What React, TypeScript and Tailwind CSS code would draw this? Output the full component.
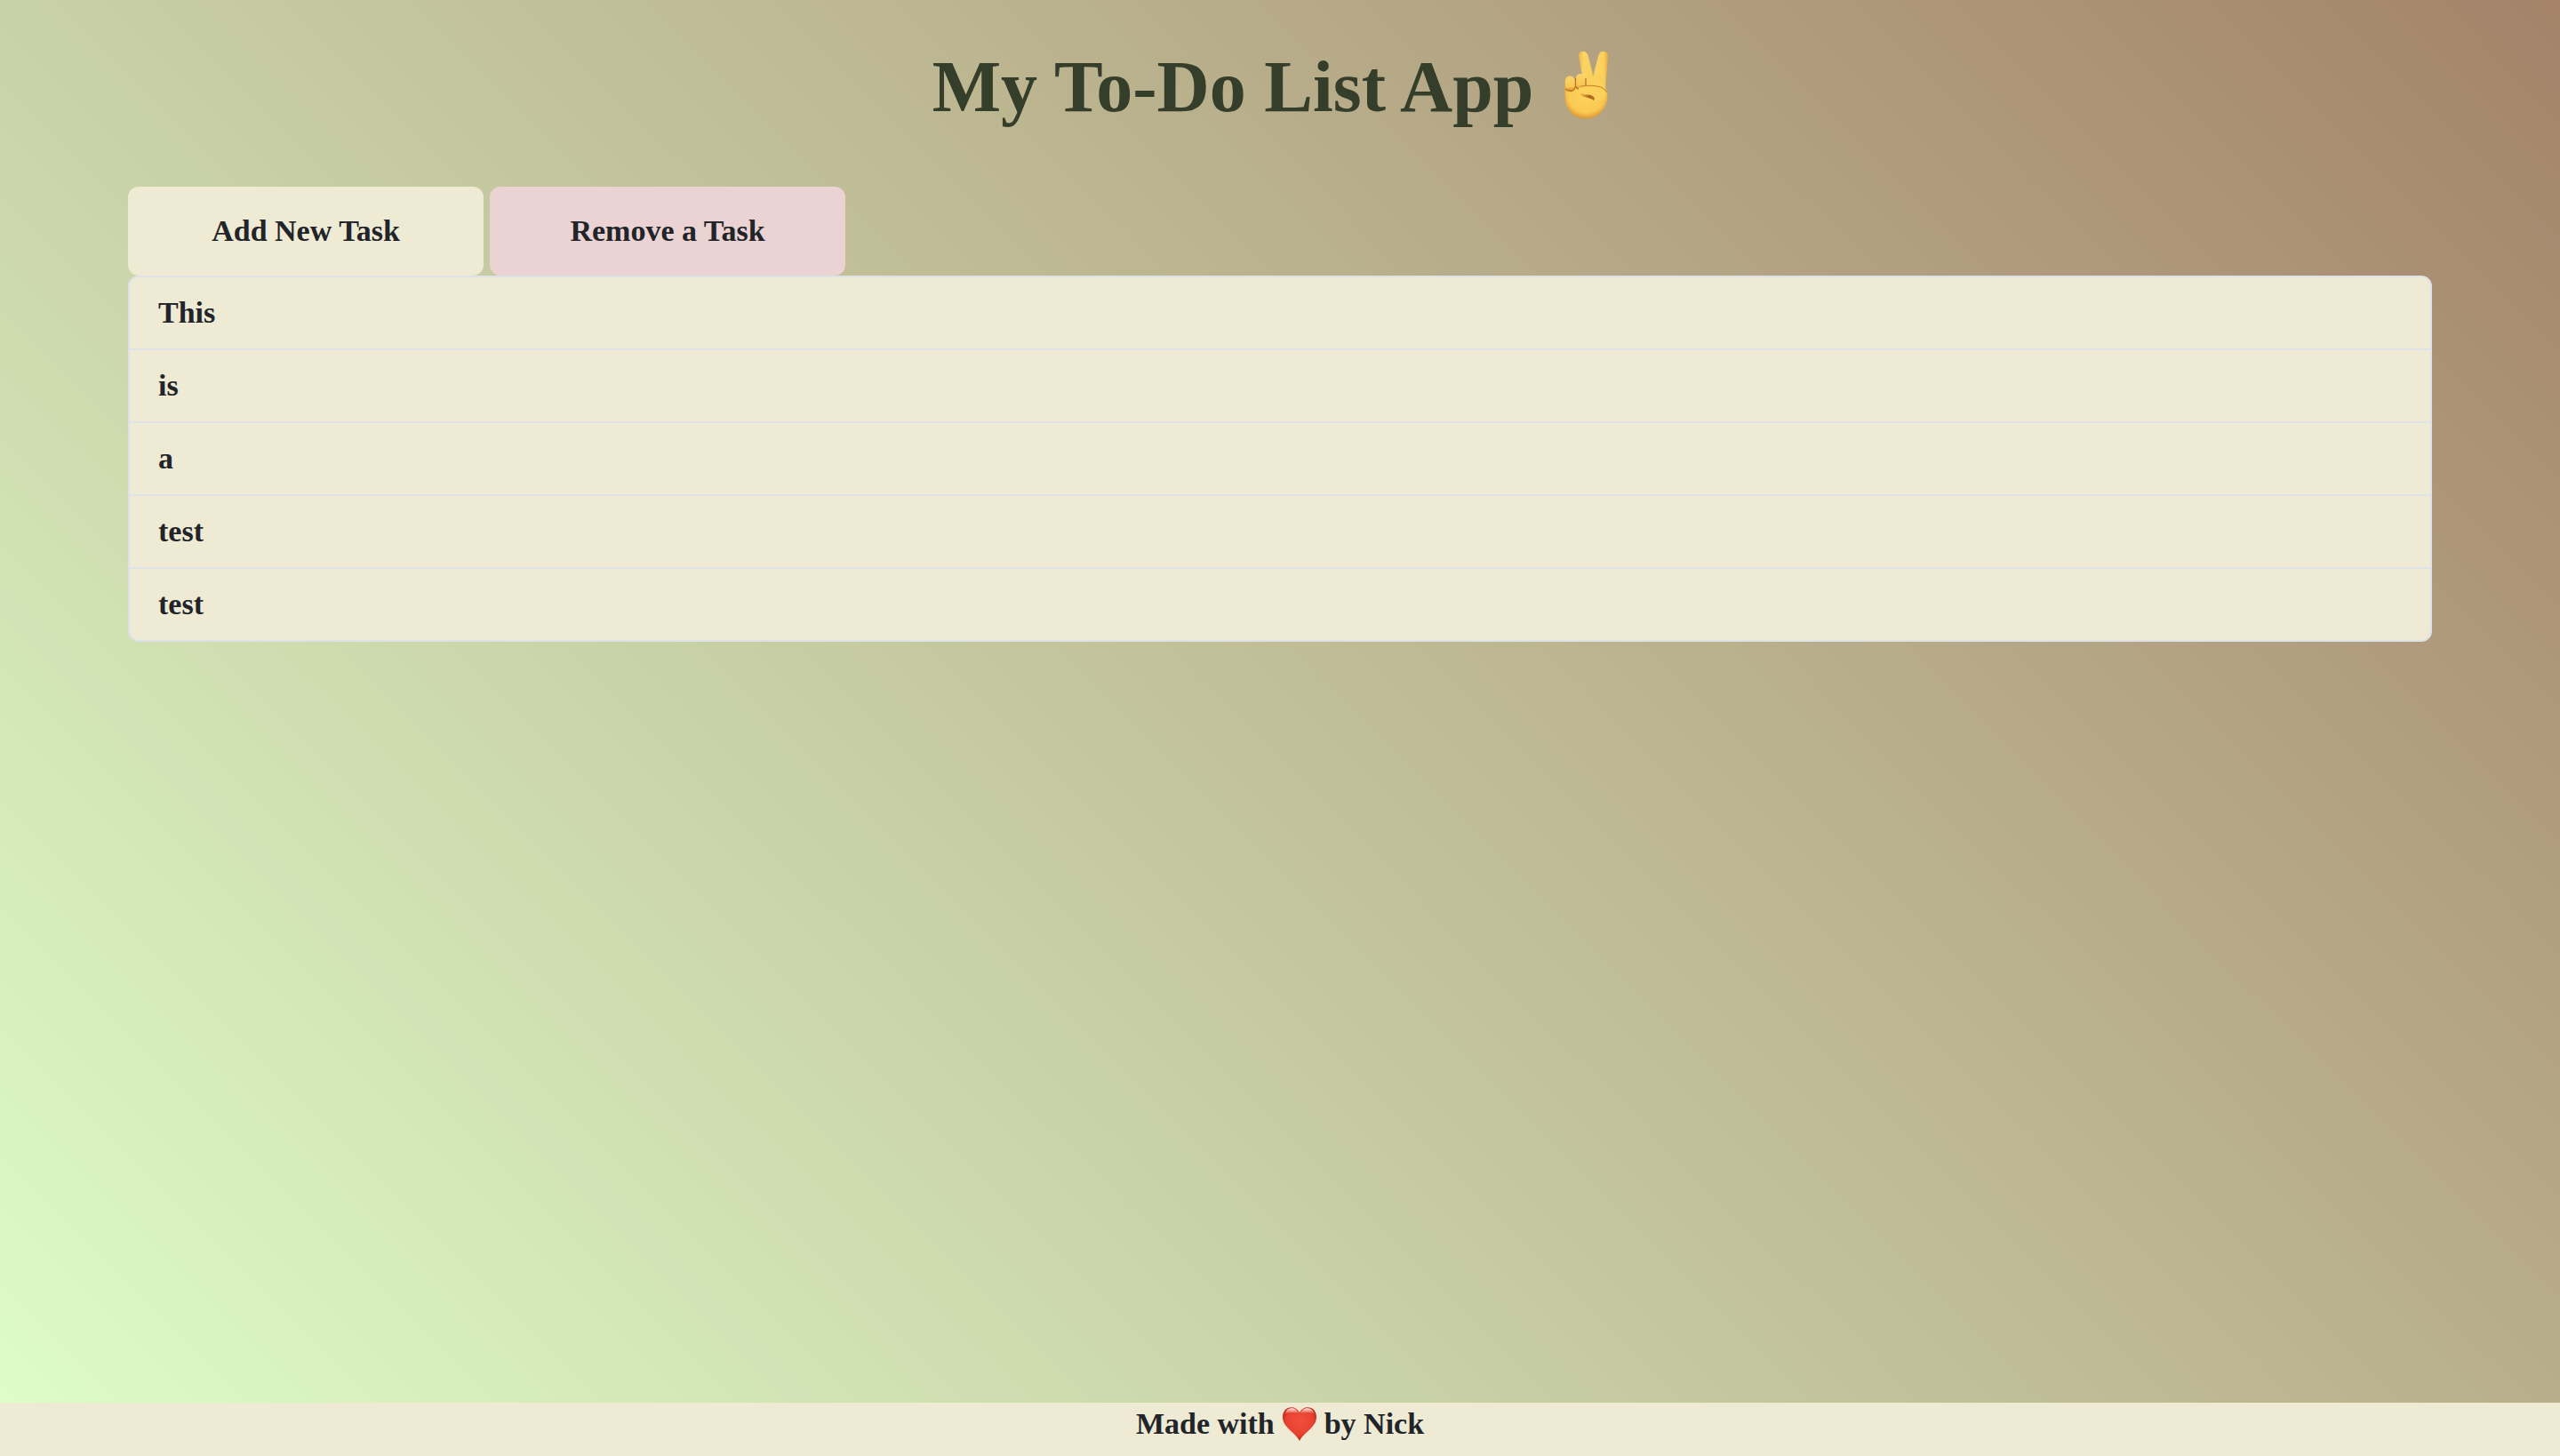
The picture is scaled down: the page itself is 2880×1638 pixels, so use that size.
import React from "react";

const tasks = ["This", "is", "a", "test", "test"];

function VictoryHand() {
  return (
    <svg viewBox="0 -2 90 100" className="h-[100px] w-[90px]" role="img" aria-label="Victory hand">
      <defs>
        <linearGradient id="finger" x1="0" y1="0" x2="1" y2="0">
          <stop offset="0" stopColor="#efb748" />
          <stop offset="0.3" stopColor="#fbd566" />
          <stop offset="0.75" stopColor="#fbce5a" />
          <stop offset="1" stopColor="#e8a93f" />
        </linearGradient>
        <radialGradient id="palm" cx="0.5" cy="0.42" r="0.6">
          <stop offset="0" stopColor="#fcd45e" />
          <stop offset="0.72" stopColor="#fac952" />
          <stop offset="1" stopColor="#d8912f" />
        </radialGradient>
        <linearGradient id="knuckle" x1="0" y1="0" x2="0" y2="1">
          <stop offset="0" stopColor="#fbd469" />
          <stop offset="0.7" stopColor="#f9c854" />
          <stop offset="1" stopColor="#d58d2e" />
        </linearGradient>
        <linearGradient id="crease" x1="0" y1="0" x2="1" y2="0">
          <stop offset="0" stopColor="#d8952f" stopOpacity="0.5" />
          <stop offset="0.6" stopColor="#a9651d" />
          <stop offset="1" stopColor="#b87425" />
        </linearGradient>
      </defs>
      <path d="M49 48L51 36L57.500 12C58.500 6 68.500 6 68 14L65 50L62 58H50Z" fill="url(#finger)" />
      <path d="M41 48L35.300 14C34 6 43.500 6 45.500 12L51 34L54 50L46 58Z" fill="url(#finger)" />
      <path d="M43 44L51.500 37L64.500 44C65 49 67 51 67.500 57C68 69 60 81 47 83.500C38 84 29 82 24 74C19 66 19.500 60 19.500 45L30 42Z" fill="url(#palm)" />
      <path d="M44 33L51 36L58 32L64.500 44L65 50L44 48Z" fill="#fbcf5c" />
      <path d="M31.800 40C31 31 42 31 42.700 38L43 45C41 52 33 52 32 47Z" fill="url(#knuckle)" />
      <path d="M19.800 43C19 33 30 34 31 41L31.300 46C30 54 21 54 20 49Z" fill="url(#knuckle)" />
      <path d="M31.500 38V47Q30 52.500 26 52.500Q22 52 20.300 50M43 38V46M32 48Q33.500 50 35.500 50" fill="none" stroke="#b87425" strokeWidth="1.300" />
      <path d="M37 55C41 55 48 55 51.500 57.500C54 60 53 62.500 51.500 63C49 60 44 60 40 58.500Q37 57 37 55Z" fill="url(#crease)" />
      <path d="M35 50.500C35 46 41 46.500 45 47C55 46 64 48 66.500 53C66 60 61 65 53 63C54 59 50 57 45 56.500C39 56.500 35 55 35 50.500Z" fill="#fbd05b" />
      <path d="M37 47.500C42 46 52 46 58 47.500Q64 49 66.500 54" fill="none" stroke="#cc8a2c" strokeWidth="1.200" />
    </svg>
  );
}

function Heart() {
  return (
    <svg viewBox="0 0 40 40" className="h-10 w-10" role="img" aria-label="love">
      <defs>
        <radialGradient id="heart" cx="0.5" cy="0.42" r="0.62">
          <stop offset="0" stopColor="#f0503f" />
          <stop offset="0.65" stopColor="#e8412f" />
          <stop offset="1" stopColor="#a51c10" />
        </radialGradient>
        <linearGradient id="shine" x1="0" y1="0" x2="0" y2="1">
          <stop offset="0" stopColor="#fff" stopOpacity="0.95" />
          <stop offset="1" stopColor="#f7a69c" stopOpacity="0" />
        </linearGradient>
      </defs>
      <path d="M20 7C18 3 14.500 1.200 10.800 1.200C5 1.200 1 5.800 1 12C1 24 15.500 29.500 20 39C24.500 29.500 39 24 39 12C39 5.800 35 1.200 29.200 1.200C25.500 1.200 22 3 20 7Z" fill="url(#heart)" />
      <path d="M3 9.500Q5 2.300 11 2.300Q16 2.300 18.800 7.500Q16 7 11 7Q6 7 3 9.500Z" fill="url(#shine)" />
      <path d="M21.200 7.500Q24 2.300 29 2.300Q35 2.300 37 9.500Q34 7 29 7Q24 7 21.200 7.500Z" fill="url(#shine)" />
    </svg>
  );
}

export default function App() {
  return (
    <div className="flex min-h-screen flex-col bg-[linear-gradient(45deg,#defec9,#a48369)] font-['Liberation_Serif',serif] text-[34px] leading-[48px] font-bold text-[#212529]">
      <header className="flex justify-center pt-12 pb-[62px]">
        <h1 className="flex items-center gap-4 text-[82px] leading-[100px] text-[#353e2a]">
          My To-Do List App
          <VictoryHand />
        </h1>
      </header>
      <main className="flex-1 px-[5%]">
        <div className="flex gap-[7px]">
          <button type="button" className="h-[100px] w-[400px] rounded-xl bg-[#efead4]">
            Add New Task
          </button>
          <button type="button" className="h-[100px] w-[400px] rounded-xl bg-[#ebd3d3]">
            Remove a Task
          </button>
        </div>
        <ul className="divide-y-2 divide-[#dee2e6] overflow-hidden rounded-xl border-2 border-[#dee2e6] bg-[#efead4]">
          {tasks.map((task, index) => (
            <li key={index} className="px-8 py-4">
              {task}
            </li>
          ))}
        </ul>
      </main>
      <footer className="flex h-[60px] justify-center bg-[#efead4]">
        <p className="flex h-12 items-center gap-2">
          Made with <Heart /> by Nick
        </p>
      </footer>
    </div>
  );
}
